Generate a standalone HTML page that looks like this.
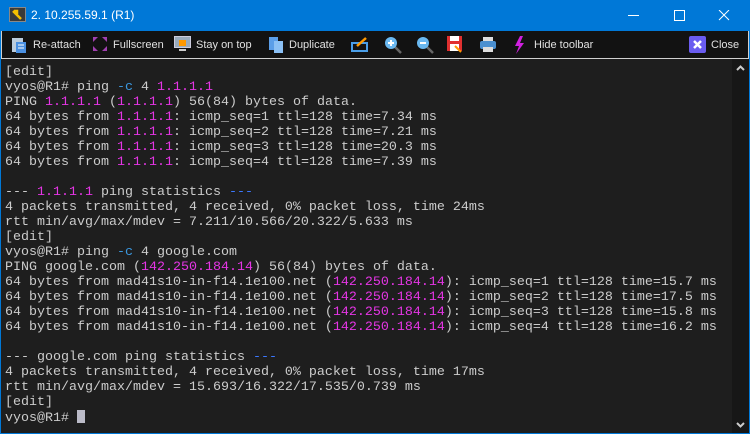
<!DOCTYPE html>
<html><head><meta charset="utf-8"><style>
*{margin:0;padding:0;box-sizing:border-box}
body{width:750px;height:434px;overflow:hidden;background:#0078d7;font-family:"Liberation Sans",sans-serif;position:relative}
#title{position:absolute;left:0;top:0;width:750px;height:31px;background:#0078d7;color:#fff;font-size:12px}
#title .t{position:absolute;left:31px;top:8px}
#tb{position:absolute;left:1px;top:31px;width:748px;height:28px;background:#121212;border:1px solid #d0d0d0;border-top:none;color:#e0e0e0;font-size:11px}
#tb span{position:absolute;top:8px}
#tb svg{position:absolute;top:5px}
#term{position:absolute;left:1px;top:59px;width:731px;height:374px;background:#1e1e1e;font-family:"Liberation Mono",monospace;font-size:13.33px;line-height:15px;color:#cccccc;padding:6px 0 0 4px;white-space:pre}
#sb{position:absolute;left:732px;top:59px;width:17px;height:374px;background:#171717}
.m{color:#e535e5}.c{color:#3a96dd}.b{color:#3b78ff}
.cur{display:inline-block;width:8px;height:13px;background:#bbbbc8;vertical-align:-2px}
</style></head><body>
<div id="title">
<svg style="position:absolute;left:9px;top:7px" width="17" height="15"><rect x="0.5" y="0.5" width="16" height="14" fill="#3a3a3a" stroke="#888"/><path d="M4 4 L8 8 L12 12 M5 4h3v3" stroke="#f5c000" stroke-width="2.5" fill="none"/></svg>
<span class="t">2. 10.255.59.1 (R1)</span>
<svg style="position:absolute;left:628px;top:10px" width="110" height="12"><path d="M0 5.5h11" stroke="#fff"/><rect x="46.5" y="0.5" width="10" height="10" fill="none" stroke="#fff"/><path d="M91 0l10 10M101 0l-10 10" stroke="#fff"/></svg>
</div>
<div id="tb">
<svg style="left:9px" width="16" height="18"><rect x="1" y="2" width="11" height="14" fill="#bcd" /><rect x="5" y="6" width="10" height="11" fill="#4a90e2"/><path d="M7 9h6M7 12h6" stroke="#fff"/></svg><span style="left:31px">Re-attach</span>
<svg style="left:90px" width="16" height="16"><path d="M1 1h5L1 6zM15 1h-5l5 5zM1 15h5L1 10zM15 15h-5l5-5z" fill="#a040b0"/></svg><span style="left:111px">Fullscreen</span>
<svg style="left:172px" width="17" height="16"><rect x="0.5" y="0.5" width="16" height="11" fill="#9ab" stroke="#ccd"/><rect x="5" y="4" width="7" height="6" fill="#f90"/><path d="M5 14h7" stroke="#ccc" stroke-width="2"/></svg><span style="left:194px">Stay on top</span>
<svg style="left:266px" width="16" height="18"><rect x="1" y="1" width="9" height="13" fill="#5b9ee8"/><rect x="6" y="5" width="9" height="12" fill="#8bc0f5"/></svg><span style="left:287px">Duplicate</span>
<svg style="left:349px" width="18" height="16"><rect x="1" y="7" width="15" height="8" fill="none" stroke="#4a9ee8" stroke-width="2"/><path d="M6 10L15 2" stroke="#f90" stroke-width="2.5"/></svg>
<svg style="left:382px" width="18" height="18"><path d="M11 11l6 6" stroke="#666" stroke-width="2.5"/><circle cx="7" cy="7" r="6" fill="#6ab8f0"/><path d="M4 7h6M7 4v6" stroke="#fff" stroke-width="2"/></svg>
<svg style="left:414px" width="18" height="18"><path d="M11 11l6 6" stroke="#666" stroke-width="2.5"/><circle cx="7" cy="7" r="6" fill="#6ab8f0"/><path d="M4 7h6" stroke="#fff" stroke-width="2"/></svg>
<svg style="left:445px" width="17" height="17"><rect x="0" y="0" width="15" height="15" fill="#e03030"/><rect x="3" y="0" width="9" height="5" fill="#fff"/><rect x="3" y="8" width="9" height="7" fill="#fff"/><path d="M8 10l6 6" stroke="#f90" stroke-width="2"/></svg>
<svg style="left:477px" width="18" height="17"><rect x="4" y="1" width="10" height="5" fill="#ddd"/><rect x="1" y="5" width="16" height="8" rx="2" fill="#4a8fd0"/><rect x="4" y="11" width="10" height="5" fill="#ddd"/></svg>
<svg style="left:511px" width="12" height="18"><path d="M7 0L2 10h4L3 18l8-11H7l3-7z" fill="#d020e0"/></svg><span style="left:532px">Hide toolbar</span>
<svg style="left:687px" width="17" height="17"><rect width="17" height="17" rx="2" fill="#6a5cf0"/><path d="M5 5l7 7M12 5l-7 7" stroke="#fff" stroke-width="2.5"/></svg><span style="left:709px">Close</span>
</div>
<div id="term">[edit]
vyos@R1# ping <span class="c">-c</span> 4 <span class="m">1.1.1.1</span>
PING <span class="m">1.1.1.1</span> (<span class="m">1.1.1.1</span>) 56(84) bytes of data.
64 bytes from <span class="m">1.1.1.1</span>: icmp_seq=1 ttl=128 time=7.34 ms
64 bytes from <span class="m">1.1.1.1</span>: icmp_seq=2 ttl=128 time=7.21 ms
64 bytes from <span class="m">1.1.1.1</span>: icmp_seq=3 ttl=128 time=20.3 ms
64 bytes from <span class="m">1.1.1.1</span>: icmp_seq=4 ttl=128 time=7.39 ms

--- <span class="m">1.1.1.1</span> ping statistics <span class="b">---</span>
4 packets transmitted, 4 received, 0% packet loss, time 24ms
rtt min/avg/max/mdev = 7.211/10.566/20.322/5.633 ms
[edit]
vyos@R1# ping <span class="c">-c</span> 4 google.com
PING google.com (<span class="m">142.250.184.14</span>) 56(84) bytes of data.
64 bytes from mad41s10-in-f14.1e100.net (<span class="m">142.250.184.14</span>): icmp_seq=1 ttl=128 time=15.7 ms
64 bytes from mad41s10-in-f14.1e100.net (<span class="m">142.250.184.14</span>): icmp_seq=2 ttl=128 time=17.5 ms
64 bytes from mad41s10-in-f14.1e100.net (<span class="m">142.250.184.14</span>): icmp_seq=3 ttl=128 time=15.8 ms
64 bytes from mad41s10-in-f14.1e100.net (<span class="m">142.250.184.14</span>): icmp_seq=4 ttl=128 time=16.2 ms

--- google.com ping statistics <span class="b">---</span>
4 packets transmitted, 4 received, 0% packet loss, time 17ms
rtt min/avg/max/mdev = 15.693/16.322/17.535/0.739 ms
[edit]
vyos@R1# <span class="cur"></span></div>
<div id="sb"><svg style="position:absolute;left:4px;top:6px" width="9" height="6"><path d="M1 5l3.5-3.5L8 5" stroke="#ccc" stroke-width="2" fill="none"/></svg><svg style="position:absolute;left:4px;top:363px" width="9" height="6"><path d="M1 1l3.5 3.5L8 1" stroke="#ccc" stroke-width="2" fill="none"/></svg></div>
</body></html>
